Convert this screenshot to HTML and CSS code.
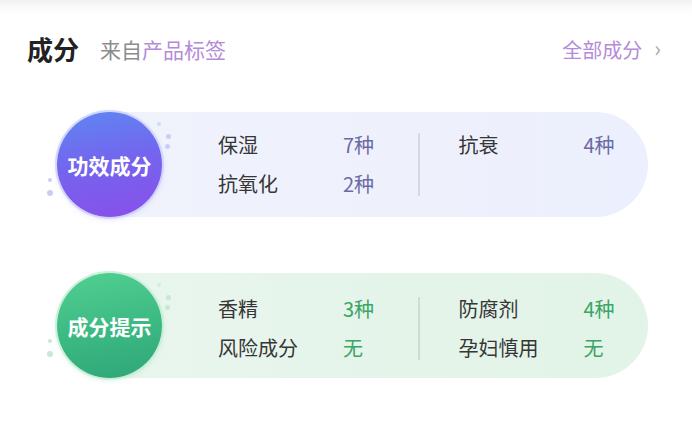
FILE: index.html
```html
<!DOCTYPE html>
<html lang="zh">
<head>
<meta charset="utf-8">
<link rel="stylesheet" href="styles.css">
</head>
<body>
<div class="page">
  <div class="header">
    <div class="title">成分</div>
    <div class="sub"><span class="gray">来自</span><span class="purple">产品标签</span></div>
    <div class="all">全部成分<span class="chev">›</span></div>
  </div>

  <div class="card card-purple">
    <div class="badge">
      <span>功效成分</span>
      <i class="dot d1"></i><i class="dot d2"></i><i class="dot d3"></i><i class="dot d4"></i><i class="dot d5"></i>
    </div>
    <div class="panel">
      <div class="col">
        <div class="row"><span class="label">保湿</span><span class="val">7种</span></div>
        <div class="row"><span class="label">抗氧化</span><span class="val">2种</span></div>
      </div>
      <div class="divider"></div>
      <div class="col">
        <div class="row"><span class="label">抗衰</span><span class="val">4种</span></div>
        <div class="row"><span class="label">&nbsp;</span><span class="val"></span></div>
      </div>
    </div>
  </div>

  <div class="card card-green">
    <div class="badge">
      <span>成分提示</span>
      <i class="dot d1"></i><i class="dot d2"></i><i class="dot d3"></i><i class="dot d4"></i><i class="dot d5"></i>
    </div>
    <div class="panel">
      <div class="col">
        <div class="row"><span class="label">香精</span><span class="val">3种</span></div>
        <div class="row"><span class="label">风险成分</span><span class="val">无</span></div>
      </div>
      <div class="divider"></div>
      <div class="col">
        <div class="row"><span class="label">防腐剂</span><span class="val">4种</span></div>
        <div class="row"><span class="label">孕妇慎用</span><span class="val">无</span></div>
      </div>
    </div>
  </div>
</div>
</body>
</html>
```

FILE: styles.css
```css
* { box-sizing: border-box; }
html, body {
  margin: 0;
  padding: 0;
}
body {
  width: 692px;
  height: 423px;
  overflow: hidden;
  background: linear-gradient(#f1f1f1 0px, #fbfbfb 8px, #ffffff 16px);
  font-family: "Noto Sans CJK SC", "Noto Sans", sans-serif;
  color: #333;
}
.page {
  display: flex;
  flex-direction: column;
}
.header {
  display: flex;
  align-items: center;
  height: 40px;
  margin-top: 29px;
  padding: 0 31px 0 27px;
}
.title {
  font-size: 26px;
  font-weight: 700;
  color: #222;
  line-height: 40px;
}
.sub {
  font-size: 21px;
  margin-left: 21px;
  line-height: 40px;
}
.gray { color: #8c8c8c; }
.purple { color: #b48bd9; }
.all {
  margin-left: auto;
  font-size: 20px;
  color: #b48bd9;
  display: flex;
  align-items: center;
}
.chev {
  color: #a9a9a9;
  font-size: 22px;
  margin-left: 12px;
  line-height: 1;
  position: relative;
  top: -2px;
}
.card {
  display: flex;
  align-items: center;
  margin-left: 57px;
  margin-right: 44px;
  height: 105px;
}
.card-purple { margin-top: 43px; }
.card-green { margin-top: 56px; }
.badge {
  position: relative;
  z-index: 1;
  flex: none;
  width: 105px;
  height: 105px;
  border-radius: 50%;
  display: flex;
  align-items: center;
  justify-content: center;
  color: #fff;
  font-size: 21px;
  font-weight: 700;
}
.card-purple .badge {
  background: linear-gradient(170deg, #5f86f2 0%, #7563ee 50%, #8a4fe9 100%);
  box-shadow: 0 0 0 2px rgba(200, 208, 252, 0.8), 0 2px 6px rgba(120, 100, 230, 0.2);
}
.card-green .badge {
  background: linear-gradient(170deg, #52cf91 0%, #3dbb84 50%, #2fa678 100%);
  box-shadow: 0 0 0 2px rgba(195, 238, 212, 0.85), 0 2px 6px rgba(60, 170, 110, 0.18);
}
.dot {
  position: absolute;
  border-radius: 50%;
  display: block;
}
.card-purple .dot { background: #c9cff3; }
.card-green .dot { background: #c6e8d4; }
.d1 { width: 4px; height: 4px; left: 100px; top: 10px; opacity: .7; }
.d2 { width: 5px; height: 5px; left: 109px; top: 22px; }
.d3 { width: 5px; height: 5px; left: 108px; top: 32px; }
.d4 { width: 4px; height: 4px; left: -9px; top: 66px; }
.d5 { width: 6px; height: 6px; left: -10px; top: 78px; }
.panel {
  flex: 1;
  height: 105px;
  margin-left: -52px;
  padding-left: 108px;
  border-radius: 0 53px 53px 0;
  display: flex;
  align-items: center;
}
.card-purple .panel {
  background: linear-gradient(90deg, #f0f2fc 0%, #eef0fc 60%, #eceffd 100%);
}
.card-green .panel {
  padding-top: 5px;
  background: linear-gradient(90deg, #e9f6ee 0%, #e4f4e9 60%, #e2f3e8 100%);
}
.col {
  display: flex;
  flex-direction: column;
  gap: 11px;
}
.row {
  display: flex;
  line-height: 28px;
  font-size: 20px;
}
.label {
  width: 125px;
  color: #363636;
}
.val {
  width: 35px;
}
.card-purple .val { color: #6c6aa6; }
.card-green .val { color: #3aa565; }
.divider {
  width: 1.5px;
  height: 63px;
  background: #d8d8de;
  margin: 0 39px 0 40px;
}
.card-green .divider { background: #cfdcd3; }
```
